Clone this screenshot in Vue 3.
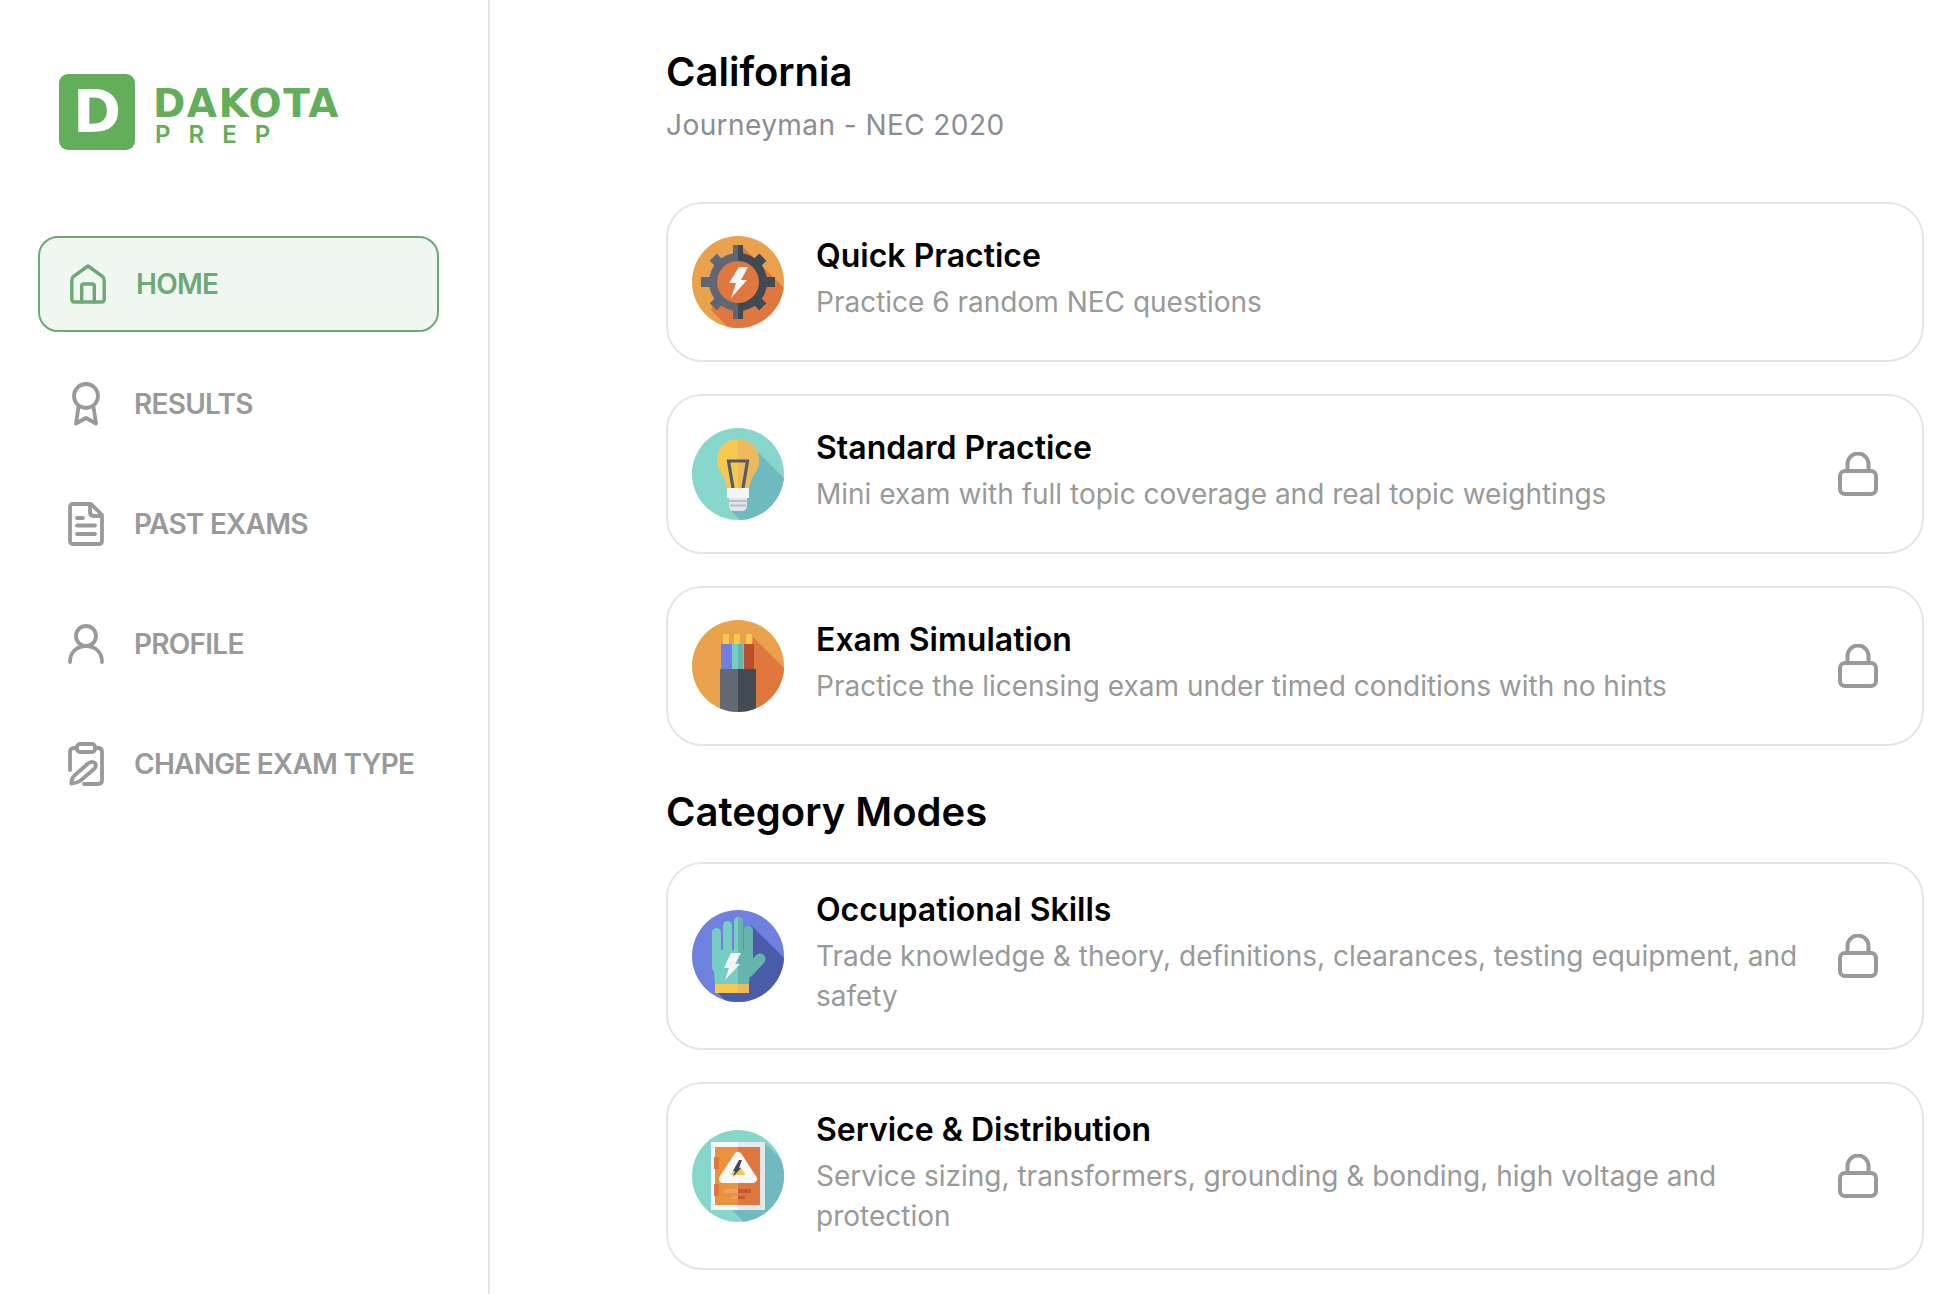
<script setup>
const modes = [
  { key: 'quick', title: 'Quick Practice', desc: 'Practice 6 random NEC questions', locked: false },
  { key: 'bulb', title: 'Standard Practice', desc: 'Mini exam with full topic coverage and real topic weightings', locked: true },
  { key: 'cable', title: 'Exam Simulation', desc: 'Practice the licensing exam under timed conditions with no hints', locked: true },
]
const categories = [
  { key: 'glove', title: 'Occupational Skills', desc: 'Trade knowledge & theory, definitions, clearances, testing equipment, and safety', locked: true },
  { key: 'panel', title: 'Service & Distribution', desc: 'Service sizing, transformers, grounding & bonding, high voltage and protection', locked: true },
]
const sections = [
  { heading: null, items: modes },
  { heading: 'Category Modes', items: categories },
]
</script>

<template>
  <div class="page">
    <aside class="sidebar">
      <div class="logo">
        <div class="logo-mark">D</div>
        <div class="logo-words">
          <div class="logo-top">DAKOTA</div>
          <div class="logo-bottom">PREP</div>
        </div>
      </div>
      <nav class="nav">
        <a class="nav-item active">
          <span class="nav-icon">
            <svg width="40" height="44" viewBox="0 0 40 44" fill="none" stroke="#6CA975" stroke-width="3.8" stroke-linejoin="round" stroke-linecap="round">
              <path d="M20 2 L36 13.5 Q38 15 38 18 V39 Q38 42 35 42 H5 Q2 42 2 39 V18 Q2 15 4 13.5 Z" />
              <path d="M13 42 V24 Q13 22 15 22 H25 Q27 22 27 24 V42" />
            </svg>
          </span>
          <span>HOME</span>
        </a>
        <a class="nav-item">
          <span class="nav-icon">
            <svg width="36" height="44" viewBox="0 0 36 44" fill="none" stroke="#999" stroke-width="3.8" stroke-linejoin="round" stroke-linecap="round">
              <circle cx="18" cy="14" r="12" />
              <path d="M10.5 25 L8 41.5 L18 36 L28 41.5 L25.5 25" />
            </svg>
          </span>
          <span>RESULTS</span>
        </a>
        <a class="nav-item">
          <span class="nav-icon">
            <svg width="36" height="44" viewBox="0 0 36 44" fill="none" stroke="#999" stroke-width="3.8" stroke-linejoin="round" stroke-linecap="round">
              <path d="M5 2 H23 L34 13 V39 Q34 42 31 42 H5 Q2 42 2 39 V5 Q2 2 5 2 Z" />
              <path d="M22 3 V10 Q22 14 26 14 H33" />
              <path d="M9 16 H15 M9 23.5 H27 M9 32 H27" />
            </svg>
          </span>
          <span>PAST EXAMS</span>
        </a>
        <a class="nav-item">
          <span class="nav-icon">
            <svg width="36" height="44" viewBox="0 0 36 44" fill="none" stroke="#999" stroke-width="3.8" stroke-linejoin="round" stroke-linecap="round">
              <circle cx="18" cy="14" r="10" />
              <path d="M2 40 C2 30 9 24 18 24 C27 24 34 30 34 40" />
            </svg>
          </span>
          <span>PROFILE</span>
        </a>
        <a class="nav-item">
          <span class="nav-icon">
            <svg width="36" height="44" viewBox="0 0 36 44" fill="none" stroke="#999" stroke-width="3.8" stroke-linejoin="round" stroke-linecap="round">
              <rect x="9" y="2" width="18" height="8" rx="3" />
              <path d="M9 6 H6 Q2 6 2 10 V28" />
              <path d="M27 6 H30 Q34 6 34 10 V38 Q34 42 30 42 H16" />
              <path d="M6 34 L20 21.5 Q24 18.5 27 21 Q29 24 26 27 L12 39 Q9 41 3.5 41.5 Q3 37 6 34 Z" />
            </svg>
          </span>
          <span>CHANGE EXAM TYPE</span>
        </a>
      </nav>
    </aside>

    <main class="main">
      <h1 class="title">California</h1>
      <p class="subtitle">Journeyman - NEC 2020</p>

      <section v-for="section in sections" :key="section.heading || 'modes'" class="section">
        <h2 v-if="section.heading" class="heading">{{ section.heading }}</h2>
        <div class="list">
          <article v-for="item in section.items" :key="item.key" class="card">
            <svg class="mode-icon" width="92" height="92" viewBox="0 0 92 92">
              <defs>
                <clipPath :id="'c-' + item.key"><circle cx="46" cy="46" r="46" /></clipPath>
                <clipPath :id="'r-' + item.key"><rect x="46" y="0" width="46" height="92" /></clipPath>
              </defs>
              <g :clip-path="`url(#c-${item.key})`">
                <template v-if="item.key === 'quick'">
                  <rect width="92" height="92" fill="#E9A24B" />
                  <polygon points="49,9 100,60 100,100 45,100 19,74" fill="#E0773F" />
                  <g fill="#5F6674">
                    <circle cx="46" cy="46" r="29" />
                    <rect x="41" y="9" width="10" height="74" />
                    <rect x="9" y="41" width="74" height="10" />
                    <rect x="41" y="11" width="10" height="70" transform="rotate(45 46 46)" />
                    <rect x="41" y="11" width="10" height="70" transform="rotate(-45 46 46)" />
                  </g>
                  <g fill="#414952" clip-path="url(#r-quick)">
                    <circle cx="46" cy="46" r="29" />
                    <rect x="41" y="9" width="10" height="74" />
                    <rect x="9" y="41" width="74" height="10" />
                    <rect x="41" y="11" width="10" height="70" transform="rotate(45 46 46)" />
                    <rect x="41" y="11" width="10" height="70" transform="rotate(-45 46 46)" />
                  </g>
                  <circle cx="46" cy="46" r="21" fill="#E0773F" />
                  <polygon points="47,31 56,31 49,44 55,44 39,62 44,47 37,47" fill="#F4F5F7" />
                </template>
                <template v-else-if="item.key === 'bulb'">
                  <rect width="92" height="92" fill="#86D6CB" />
                  <polygon points="66,24 100,58 100,100 56,100 40,84 40,40" fill="#70B9BF" />
                  <path d="M46 11 C34 11 25 20 25 32 C25 44 34 48 35 61 H57 C58 48 67 44 67 32 C67 20 58 11 46 11 Z" fill="#F5C950" />
                  <path d="M46 11 C58 11 67 20 67 32 C67 44 58 48 57 61 H46 Z" fill="#EDBA5B" />
                  <path d="M41 60 L36.5 33 H55.5 L51 60" fill="none" stroke="#555C66" stroke-width="3.2" />
                  <rect x="35" y="60" width="22" height="10" fill="#F4F5F7" />
                  <path d="M37 70 H55 V78 Q55 83 50 83 H42 Q37 83 37 78 Z" fill="#E3E5EA" />
                  <path d="M36 73 H56 M38 77.5 H54" stroke="#B9BEC8" stroke-width="2" />
                </template>
                <template v-else-if="item.key === 'cable'">
                  <rect width="92" height="92" fill="#E9A24B" />
                  <polygon points="61,17 100,56 100,100 60,100 60,30" fill="#E0773F" />
                  <rect x="31" y="14" width="6" height="10" fill="#F5C950" />
                  <rect x="42" y="14" width="6" height="10" fill="#F5C950" />
                  <rect x="54" y="14" width="6" height="10" fill="#F5C950" />
                  <rect x="29" y="24" width="11" height="25" fill="#6F80DE" />
                  <rect x="40" y="24" width="6" height="25" fill="#78CDC2" />
                  <rect x="46" y="24" width="5" height="25" fill="#65B5AE" />
                  <rect x="52" y="24" width="10" height="25" fill="#B94F2C" />
                  <rect x="28" y="49" width="18" height="43" fill="#626975" />
                  <rect x="46" y="49" width="18" height="43" fill="#434B55" />
                </template>
                <template v-else-if="item.key === 'glove'">
                  <rect width="92" height="92" fill="#6F80DE" />
                  <polygon points="59,15 100,56 100,100 42,100 26,83 50,60" fill="#4A5BAA" />
                  <g fill="#78CDC2">
                    <rect x="20" y="18" width="9" height="44" rx="4.5" />
                    <rect x="31" y="11" width="9" height="44" rx="4.5" />
                    <rect x="42" y="7" width="9" height="44" rx="4.5" />
                    <path d="M20 40 L23 74 H46 V40 Z" />
                  </g>
                  <g fill="#65B5AE">
                    <path d="M46 7 Q51 7 51 12 V44 H46 Z" />
                    <rect x="52" y="16" width="9" height="44" rx="4.5" />
                    <path d="M46 40 H60 L57 74 H46 Z" />
                    <path d="M56 62 L68 49" stroke="#65B5AE" stroke-width="11" stroke-linecap="round" />
                  </g>
                  <rect x="23" y="74" width="23" height="9" fill="#F5C950" />
                  <rect x="46" y="74" width="11" height="9" fill="#EDBA5B" />
                  <polygon points="39,43 49,43 43,54 48,54 33,70 37,58 32,58" fill="#F4F5F7" />
                </template>
                <template v-else>
                  <rect width="92" height="92" fill="#86D6CB" />
                  <polygon points="72,12 100,40 100,100 60,100 40,80 72,80" fill="#70B9BF" />
                  <rect x="19" y="12" width="27" height="68" fill="#F7F8FA" />
                  <rect x="46" y="12" width="27" height="68" fill="#E6E8EE" />
                  <rect x="23" y="17" width="23" height="58" fill="#E9933F" />
                  <rect x="46" y="17" width="22" height="58" fill="#E0773F" />
                  <rect x="22" y="27" width="5" height="12" fill="#E0773F" />
                  <rect x="22" y="54" width="5" height="12" fill="#E0773F" />
                  <path d="M46 26 L61 49 H31 Z" fill="#F5C950" stroke="#F7F8FA" stroke-width="8" stroke-linejoin="round" />
                  <polygon points="47,30 50,30 47,38 49,38 41,47 43,41 41,41" fill="#414952" />
                  <rect x="32" y="59" width="14" height="4" fill="#EDA062" />
                  <rect x="46" y="59" width="13" height="4" fill="#BF5A33" />
                  <rect x="39" y="66" width="7" height="3" fill="#EDA062" />
                  <rect x="46" y="66" width="7" height="3" fill="#BF5A33" />
                </template>
              </g>
            </svg>
            <div class="card-text">
              <h3 class="card-title">{{ item.title }}</h3>
              <p class="card-desc">{{ item.desc }}</p>
            </div>
            <svg v-if="item.locked" class="lock" width="40" height="44" viewBox="0 0 40 44" fill="none" stroke="#999" stroke-width="4" stroke-linejoin="round">
              <path d="M9.5 19 V12 A10.5 10.5 0 0 1 30.5 12 V19" />
              <rect x="2" y="19" width="36" height="23" rx="5" />
            </svg>
          </article>
        </div>
      </section>
    </main>
  </div>
</template>

<style>
html, body { margin: 0; background: #fff; }
</style>

<style scoped>
.page {
  display: flex;
  width: 1960px;
  height: 1294px;
  overflow: hidden;
  background: #fff;
  font-family: Inter, "Liberation Sans", sans-serif;
}
.sidebar {
  box-sizing: border-box;
  width: 490px;
  flex: none;
  border-right: 2px solid #e5e5e5;
  padding: 74px 0 0 38px;
}
.logo {
  display: flex;
  align-items: flex-start;
  gap: 18px;
  margin-left: 21px;
}
.logo-mark {
  width: 76px;
  height: 76px;
  border-radius: 9px;
  background: #62ae5b;
  color: #fff;
  font-family: "DejaVu Sans", sans-serif;
  font-size: 58px;
  font-weight: 700;
  line-height: 76px;
  text-align: center;
}
.logo-words { color: #62ae5b; padding-top: 12px; white-space: nowrap; }
.logo-top {
  font-family: "DejaVu Sans", sans-serif;
  font-size: 39px;
  font-weight: 700;
  line-height: 36px;
  letter-spacing: 1.5px;
}
.logo-bottom {
  font-size: 24px;
  font-weight: 600;
  line-height: 24px;
  letter-spacing: 18px;
  margin-top: 1px;
  padding-left: 2px;
}
.nav {
  display: flex;
  flex-direction: column;
  gap: 24px;
  margin-top: 86px;
  width: 401px;
}
.nav-item {
  box-sizing: border-box;
  display: flex;
  align-items: center;
  gap: 30px;
  height: 96px;
  padding: 0 30px;
  border-radius: 20px;
  color: #999;
  font-size: 28px;
  font-weight: 600;
  letter-spacing: -0.75px;
  white-space: nowrap;
}
.nav-item.active {
  border: 2px solid #6ca975;
  background: #f0f7f1;
  color: #6ca975;
}
.nav-icon {
  display: flex;
  justify-content: center;
  width: 36px;
  flex: none;
}
.main {
  box-sizing: border-box;
  flex: 1;
  min-width: 0;
  padding: 49px 36px 0 176px;
}
.title {
  margin: 0;
  color: #000;
  font-size: 40px;
  font-weight: 600;
  line-height: 46px;
}
.subtitle {
  margin: 10px 0 0;
  color: #8a8d93;
  font-family: Inter, sans-serif;
  font-size: 28px;
  line-height: 40px;
  letter-spacing: 0.43px;
}
.section { margin-top: 57px; }
.section + .section { margin-top: 43px; }
.heading {
  margin: 0 0 27px;
  color: #000;
  font-size: 40px;
  font-weight: 600;
  line-height: 46px;
}
.list {
  display: flex;
  flex-direction: column;
  gap: 32px;
}
.card {
  box-sizing: border-box;
  display: flex;
  align-items: center;
  gap: 32px;
  min-height: 160px;
  padding: 25.5px 44px 25.5px 24px;
  border: 2px solid #e5e5e5;
  border-radius: 36px;
  background: #fff;
}
.mode-icon { flex: none; }
.card-text {
  flex: 1;
  min-width: 0;
  padding-bottom: 7px;
}
.card-title {
  margin: 0 0 6px;
  color: #000;
  font-size: 32px;
  font-weight: 600;
  line-height: 40px;
}
.card-desc {
  margin: 0;
  color: #999;
  font-size: 28px;
  font-weight: 400;
  line-height: 40px;
}
.lock { flex: none; }
</style>
